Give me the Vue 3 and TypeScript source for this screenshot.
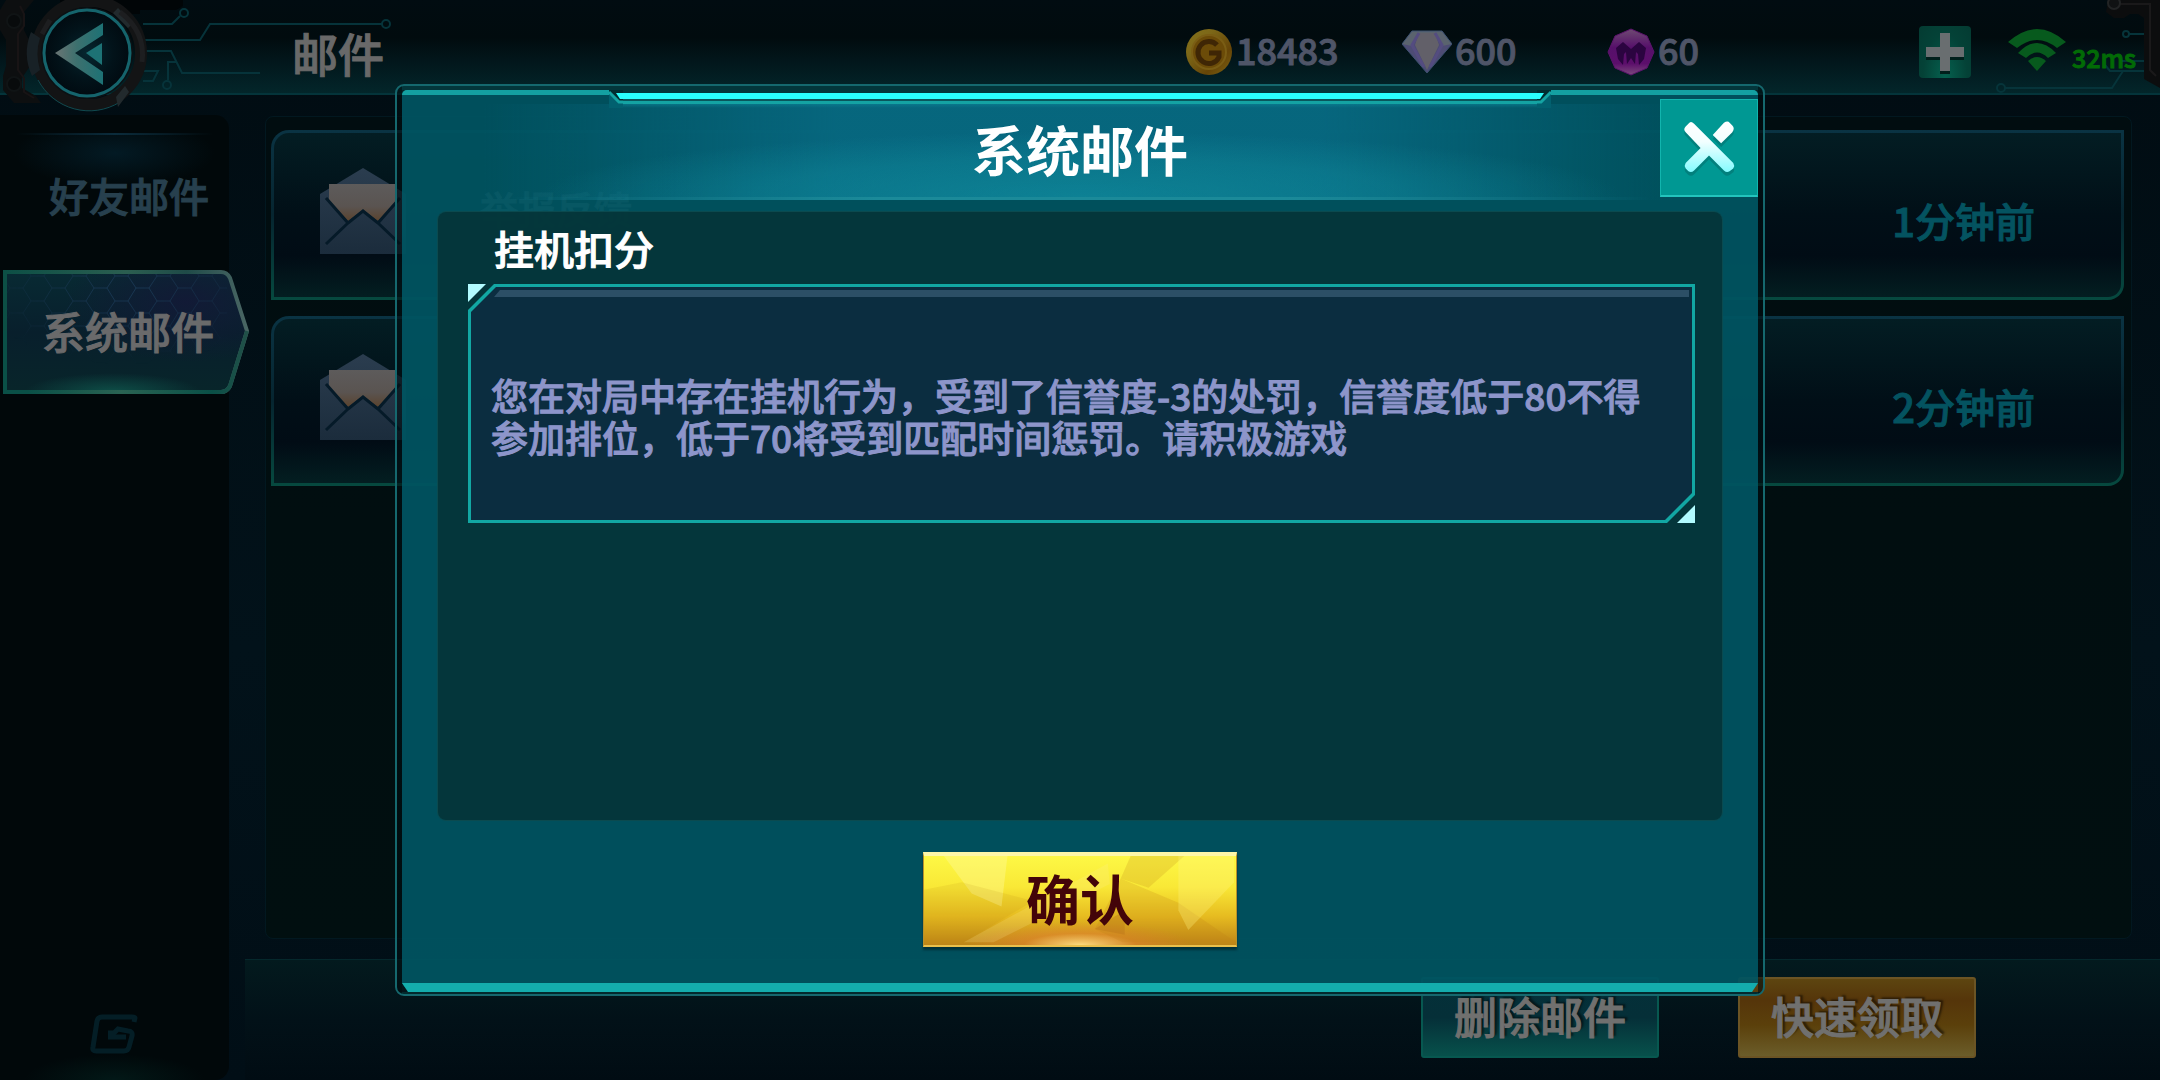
<script setup lang="ts">
import { ref } from 'vue'

interface Mail {
  id: number
  title: string
  time: string
}

const tabs: string[] = ['好友邮件', '系统邮件']
const activeTab = ref<string>('系统邮件')

const mails: Mail[] = [
  { id: 1, title: '举报反馈', time: '1分钟前' },
  { id: 2, title: '', time: '2分钟前' },
]

const open = ref<boolean>(true)
const message =
  '您在对局中存在挂机行为，受到了信誉度-3的处罚，信誉度低于80不得参加排位，低于70将受到匹配时间惩罚。请积极游戏'

function close(): void {
  open.value = false
}
</script>

<template>
  <div class="page">
    <header class="topbar">
      <svg class="decor decor-left" width="400" height="112" viewBox="0 0 400 112" aria-hidden="true">
        <defs>
          <linearGradient id="arrowFill" x1="0" y1="0" x2="1" y2="0">
            <stop offset="0" stop-color="#6b7574" />
            <stop offset="0.45" stop-color="#3d706e" />
            <stop offset="1" stop-color="#1d7275" />
          </linearGradient>
          <radialGradient id="dial">
            <stop offset="0" stop-color="#06262f" />
            <stop offset="0.6" stop-color="#02131a" />
            <stop offset="1" stop-color="#010b11" />
          </radialGradient>
        </defs>
        <path d="M100 0H183V6L176 10H140V14H60V0Z" fill="#010507" />
        <path d="M6 0H34L24 12V30L30 42V66L22 78V88L36 96L41 103H14L3 90V76L6 66V40L0 30V10Z" fill="#0d0f10" />
        <path d="M20 6L24 14V26L18 34V70L24 78V92L34 98" fill="none" stroke="#181415" stroke-width="2" />
        <circle cx="14" cy="21" r="7" fill="#080b0c" stroke="#101415" stroke-width="2" />
        <circle cx="14" cy="84" r="7" fill="#080b0c" stroke="#101415" stroke-width="2" />
        <g fill="none" stroke="#06333a" stroke-width="2">
          <path d="M143 24H172L180 16" />
          <circle cx="184" cy="13" r="4" />
          <path d="M143 40H200L210 24H382" />
          <circle cx="386" cy="24" r="4" />
          <path d="M143 51H171L182 73H260" />
          <path d="M177 62H168V80" />
          <circle cx="167" cy="85" r="4" />
          <path d="M143 71H158L153 81H143" />
        </g>
        <circle cx="89" cy="53" r="52" fill="none" stroke="#131415" stroke-width="12" />
        <path d="M38 80A58 58 0 0 0 120 102" fill="none" stroke="#0f4a50" stroke-width="1" />
        <path d="M31 32L40 38Q35 53 40 70L32 76Q22 54 31 32Z" fill="#182126" />
        <path d="M118 8L133 23L128 28L113 13ZM116 97L125 86L129 92L118 107Z" fill="#222a2d" />
        <path d="M50 20L42 34M120 12Q146 32 142 62" fill="none" stroke="#1d1e20" stroke-width="5" />
        <circle cx="87" cy="53" r="46" fill="#0b1114" />
        <circle cx="87" cy="53" r="43" fill="url(#dial)" stroke="#15646c" stroke-width="3" />
        <path d="M55 53L103 23V35L75 53L103 72V85Z" fill="url(#arrowFill)" />
        <path d="M86 53L102 43V65Z" fill="#1d7275" />
      </svg>
      <button class="back" type="button" aria-label="返回"></button>
      <h1 class="heading">邮件</h1>

      <ul class="wallet">
        <li>
          <svg width="48" height="48" viewBox="0 0 48 48" aria-hidden="true">
            <defs>
              <linearGradient id="coin" x1="0" y1="0" x2="1" y2="1">
                <stop offset="0" stop-color="#84701a" />
                <stop offset="0.3" stop-color="#7d6818" />
                <stop offset="0.7" stop-color="#664507" />
                <stop offset="1" stop-color="#7d6414" />
              </linearGradient>
            </defs>
            <ellipse cx="24" cy="24" rx="23" ry="23" fill="url(#coin)" />
            <circle cx="24" cy="24" r="17" fill="#6b4b08" stroke="#7a5d14" stroke-width="2" />
            <path d="M32 17A11 11 0 1 0 34 29V25H24" fill="none" stroke="#3f2605" stroke-width="5" />
          </svg>
          <span>18483</span>
        </li>
        <li>
          <svg width="50" height="44" viewBox="0 0 50 44" aria-hidden="true">
            <path d="M10 1H40L50 14L25 43L0 14Z" fill="#4d4c74" />
            <path d="M10 1H40L50 14L40 16L33 5H17L10 16L0 14Z" fill="#5a636e" />
            <path d="M17 3H33L37 15L25 40L13 15Z" fill="#626069" />
            <path d="M17 3L10 15L22 37M33 3L40 15L28 37" fill="none" stroke="#544c80" stroke-width="3" />
            <path d="M10 1H40L50 14L25 43L0 14Z" fill="none" stroke="#3a506f" stroke-width="1" />
          </svg>
          <span>600</span>
        </li>
        <li>
          <svg width="48" height="48" viewBox="0 0 48 48" aria-hidden="true">
            <defs>
              <linearGradient id="gem" x1="0" y1="0" x2="0" y2="1">
                <stop offset="0" stop-color="#6e4a72" />
                <stop offset="0.4" stop-color="#56106a" />
                <stop offset="0.75" stop-color="#5c0e6b" />
                <stop offset="1" stop-color="#7b4a7c" />
              </linearGradient>
            </defs>
            <path d="M24 1L40 8L47 24L40 40L24 47L8 40L1 24L8 8Z" fill="url(#gem)" stroke="#5c126c" stroke-width="1" />
            <path
              d="M9 20L16 14L24 21L32 14L39 20L37 31L32 37L31 26L29 24L28 36L24 30L20 36L19 24L17 26L16 37L11 31Z"
              fill="#2b0440"
            />
          </svg>
          <span>60</span>
        </li>
      </ul>

      <button class="plus" type="button" aria-label="添加">
        <svg width="52" height="52" viewBox="0 0 52 52" aria-hidden="true">
          <path d="M21 10H31V24H45V34H31V48H21V34H7V24H21Z" fill="#01201c" />
          <path d="M21 7H31V21H45V31H31V45H21V31H7V21H21Z" fill="#696e70" />
        </svg>
      </button>
      <svg class="wifi" width="58" height="44" viewBox="0 0 58 44" aria-hidden="true">
        <path d="M0 14Q29 -12 58 14L49 20Q29 4 9 20Z" fill="#075a1d" />
        <path d="M10 25Q29 5 48 25L40 30Q29 19 18 30Z" fill="#075a1d" />
        <path d="M20 33Q29 25 38 33L29 43Z" fill="#075a1d" />
      </svg>
      <span class="ping">32ms</span>
      <svg class="decor decor-right" width="170" height="100" viewBox="0 0 170 100" aria-hidden="true">
        <g fill="none" stroke="#06343a" stroke-width="2">
          <circle cx="136" cy="34" r="3" />
          <path d="M139 34H156M115 65L120 71H156M130 61H156" />
          <circle cx="11" cy="88" r="4" />
          <path d="M15 88H122L133 71" />
        </g>
        <path d="M118 0H170V88L154 79V18L148 14H140L134 18H124L116 12Z" fill="#0c0d0e" />
        <path d="M130 4H160V70L166 76" fill="none" stroke="#1a191a" stroke-width="2" />
        <circle cx="124" cy="3" r="6" fill="#101213" stroke="#222425" stroke-width="2" />
      </svg>
    </header>

    <main class="main">
      <nav class="sidebar">
        <button
          v-for="tab in tabs"
          :key="tab"
          type="button"
          class="tab"
          :class="{ active: tab === activeTab }"
          @click="activeTab = tab"
        >
          <svg v-if="tab === activeTab" class="tab-shape" width="246" height="126" viewBox="0 0 246 126" aria-hidden="true">
            <defs>
              <pattern id="hex" width="42" height="25" patternUnits="userSpaceOnUse" x="14" y="6">
                <path
                  d="M0 12H6L14 0H27L35 12H42M6 12L14 25H27L35 12"
                  fill="none"
                  stroke="#1a3853"
                  stroke-width="1"
                />
              </pattern>
              <radialGradient id="hexFade" cx="0.5" cy="0.15" r="0.6">
                <stop offset="0" stop-color="#fff" />
                <stop offset="1" stop-color="#000" />
              </radialGradient>
              <mask id="hexMask"><rect width="246" height="126" fill="url(#hexFade)" /></mask>
              <radialGradient id="violet" cx="0.75" cy="0.25" r="0.5">
                <stop offset="0" stop-color="#121a36" />
                <stop offset="1" stop-color="#121a36" stop-opacity="0" />
              </radialGradient>
              <linearGradient id="tabFill" x1="0" y1="0" x2="0" y2="1">
                <stop offset="0" stop-color="#082a33" />
                <stop offset="0.5" stop-color="#081f2c" />
                <stop offset="1" stop-color="#08252a" />
              </linearGradient>
              <radialGradient id="tabGlow" cx="0.48" cy="1" r="0.4" gradientTransform="translate(0 0.6) scale(1 0.4)">
                <stop offset="0" stop-color="#106054" stop-opacity="0.7" />
                <stop offset="1" stop-color="#106054" stop-opacity="0" />
              </radialGradient>
              <linearGradient id="tabEdge" x1="0" y1="0" x2="1" y2="0">
                <stop offset="0" stop-color="#0c4f45" />
                <stop offset="0.5" stop-color="#2b5e50" />
                <stop offset="0.75" stop-color="#1f4b48" />
                <stop offset="1" stop-color="#4a6664" />
              </linearGradient>
              <linearGradient id="tabBase" gradientUnits="userSpaceOnUse" x1="0" y1="0" x2="246" y2="0">
                <stop offset="0.1" stop-color="#0a5047" />
                <stop offset="0.48" stop-color="#2a6353" />
                <stop offset="0.85" stop-color="#0a5047" />
                <stop offset="1" stop-color="#225048" />
              </linearGradient>
            </defs>
            <path d="M2 2H218Q224 2 227 8L244 61L227 116Q224 122 218 122H2Z" fill="url(#tabFill)" />
            <path d="M2 2H218Q224 2 227 8L244 61L227 116Q224 122 218 122H2Z" fill="url(#violet)" />
            <rect x="4" y="4" width="220" height="118" fill="url(#hex)" mask="url(#hexMask)" />
            <rect x="4" y="4" width="220" height="118" fill="url(#tabGlow)" />
            <path
              d="M2 2H218Q224 2 227 8L244 61L227 116Q224 122 218 122H2Z"
              fill="none"
              stroke="url(#tabEdge)"
              stroke-width="4"
            />
            <path d="M2 61V122H218Q224 122 227 116L244 61" fill="none" stroke="url(#tabBase)" stroke-width="4" />
          </svg>
          <span>{{ tab }}</span>
        </button>
        <svg class="brand" width="48" height="40" viewBox="0 0 48 40" aria-hidden="true">
          <path
            d="M44 8L45 4Q45 3 42 3H12Q8 3 7 7L3 33Q2 37 6 37H34Q38 37 39 33L42 22Q43 17 38 17L28 15L24 19H18"
            fill="none"
            stroke="#041e26"
            stroke-width="5"
          />
          <path d="M18 23H36" stroke="#041e26" stroke-width="5" />
        </svg>
      </nav>

      <section class="content">
        <ul class="mails">
          <li v-for="mail in mails" :key="mail.id" class="mail">
            <svg class="envelope" width="86" height="88" viewBox="0 0 86 88" aria-hidden="true">
              <defs>
                <linearGradient id="paper" x1="0" y1="0" x2="0" y2="1">
                  <stop offset="0" stop-color="#5d5b5b" />
                  <stop offset="0.6" stop-color="#5a5451" />
                  <stop offset="1" stop-color="#5a432e" />
                </linearGradient>
                <linearGradient id="cover" x1="0" y1="0" x2="0" y2="1">
                  <stop offset="0" stop-color="#2b3d4f" />
                  <stop offset="1" stop-color="#1b2c3c" />
                </linearGradient>
              </defs>
              <path d="M0 26L43 0L86 26V86H0Z" fill="url(#cover)" />
              <path d="M9 16H77V34L58 53L43 42L28 53L9 34Z" fill="url(#paper)" />
              <path d="M6 30L28 55L6 76M80 30L58 55L80 76M28 55L43 43L58 55" fill="none" stroke="#051a28" stroke-width="3" />
            </svg>
            <h2 v-if="mail.title" class="mail-title">{{ mail.title }}</h2>
            <time class="mail-time">{{ mail.time }}</time>
          </li>
        </ul>
        <footer class="actions">
          <button class="action delete" type="button">删除邮件</button>
          <button class="action claim" type="button">快速领取</button>
        </footer>
      </section>
    </main>

    <div v-if="open" class="overlay">
      <section class="dialog" role="dialog" aria-modal="true" aria-labelledby="dialog-title">
        <div class="dialog-body">
          <div class="rail" aria-hidden="true">
            <i class="rail-side"></i>
            <svg width="14" height="18" viewBox="0 0 14 18">
              <path d="M0 0H14V13L10 13L0 3Z" fill="#012c31" />
              <path d="M0 5V2L9 12H14V18H0Z" fill="#02606f" />
              <path d="M0 2L10 12H14" fill="none" stroke="#14a3a3" stroke-width="3" />
              <path d="M7 3H14V9H11Z" fill="#2affff" />
            </svg>
            <i class="rail-mid"></i>
            <svg width="14" height="18" viewBox="0 0 14 18">
              <path d="M14 0H0V13L4 13L14 3Z" fill="#012c31" />
              <path d="M14 5V2L5 12H0V18H14Z" fill="#02606f" />
              <path d="M14 2L4 12H0" fill="none" stroke="#14a3a3" stroke-width="3" />
              <path d="M7 3H0V9H3Z" fill="#2affff" />
            </svg>
            <i class="rail-side"></i>
          </div>
          <header class="dialog-head">
            <h2 id="dialog-title">系统邮件</h2>
            <button class="close" type="button" aria-label="关闭" @click="close">
              <svg width="54" height="56" viewBox="0 0 56 60" aria-hidden="true">
                <defs>
                  <linearGradient id="cross" x1="0" y1="0" x2="0" y2="1">
                    <stop offset="0" stop-color="#ffffff" />
                    <stop offset="0.4" stop-color="#f2ffff" />
                    <stop offset="1" stop-color="#84fbff" />
                  </linearGradient>
                </defs>
                <path
                  d="M7 3Q9 1 12 4L54 46Q56 49 54 52L50 55Q47 57 44 54L28 38L12 54Q9 57 6 55L3 52Q1 49 3 46L19 30L3 13Q0 10 3 7ZM44 3Q47 1 49 2L53 6Q56 9 53 13L41 25L32 16Z"
                  fill="#046f6e"
                  transform="translate(0 4)"
                  opacity="0.6"
                />
                <path
                  d="M7 3Q9 1 12 4L54 46Q56 49 54 52L50 55Q47 57 44 54L28 38L12 54Q9 57 6 55L3 52Q1 49 3 46L19 30L3 13Q0 10 3 7ZM44 3Q47 1 49 2L53 6Q56 9 53 13L41 25L32 16Z"
                  fill="url(#cross)"
                />
              </svg>
            </button>
          </header>
          <div class="panel">
            <h3 class="panel-title">挂机扣分</h3>
            <div class="letter-frame">
              <div class="letter">
                <p>{{ message }}</p>
              </div>
            </div>
          </div>
          <button class="confirm" type="button" @click="close">
            <svg class="facets" viewBox="0 0 314 95" preserveAspectRatio="none" aria-hidden="true">
              <path d="M20 0H84L78 54L48 40Z" fill="#fffa9a" opacity="0.4" />
              <path d="M0 36L38 28L110 48L40 92H0Z" fill="#b98112" opacity="0.12" />
              <path d="M40 92L185 8L187 30L70 92Z" fill="#fff0a0" opacity="0.18" />
              <path d="M208 0H262L226 34L198 24Z" fill="#c9921b" opacity="0.25" />
              <path d="M198 24L256 50L314 92L200 92L172 78Z" fill="#c07c14" opacity="0.2" />
              <path d="M256 0H312V28L266 79L256 58Z" fill="#fff480" opacity="0.3" />
              <path d="M172 78L202 58V84Z" fill="#b7701a" opacity="0.35" />
            </svg>
            <span>确认</span>
          </button>
        </div>
      </section>
    </div>
  </div>
</template>

<style>
body {
  margin: 0;
  background: #010d13;
}
</style>

<style scoped>
.page {
  position: relative;
  display: flex;
  flex-direction: column;
  min-height: 100vh;
  overflow: hidden;
  background: linear-gradient(180deg, #010c12, #02121a 60%, #010e16);
  font-family: 'Noto Sans CJK SC', 'Noto Sans', sans-serif;
  font-weight: 500;
  -webkit-text-stroke: 1px currentColor;
  color: #696969;
}

h1,
h2,
h3,
p,
ul {
  margin: 0;
  padding: 0;
}

ul {
  list-style: none;
}

button {
  margin: 0;
  padding: 0;
  border: 0;
  background: none;
  font: inherit;
  color: inherit;
  cursor: pointer;
}

/* top bar */
.topbar {
  position: relative;
  z-index: 1;
  display: flex;
  align-items: center;
  box-sizing: border-box;
  height: 95px;
  padding: 10px 24px 0 42px;
  border-bottom: 2px solid #04343a;
  background: linear-gradient(180deg, #010c11 0%, #010b0e 40%, #02161b 65%, #03262a 100%);
}

.decor {
  position: absolute;
  top: 0;
  pointer-events: none;
}

.decor-left {
  left: 0;
}

.decor-right {
  right: 0;
}

.back {
  position: relative;
  width: 90px;
  height: 84px;
  border-radius: 50%;
}

.heading {
  margin: 0 auto 0 160px;
  font-size: 46px;
  line-height: 52px;
  font-weight: 500;
}

.wallet {
  display: grid;
  grid-template-columns: 217px 205px 312px;
}

.wallet li {
  display: flex;
  align-items: center;
  gap: 3px;
  font-size: 36px;
  line-height: 48px;
  color: #4f5568;
}

.wallet span {
  margin-bottom: 6px;
}

.plus {
  width: 52px;
  height: 52px;
  border-radius: 4px;
  background: radial-gradient(ellipse at 50% 100%, #05614f, #044237 60%, #043b32);
}

.plus svg {
  display: block;
}

.wifi {
  margin: 0 6px 4px 37px;
}

.ping {
  position: relative;
  z-index: 1;
  margin-top: 10px;
  font-size: 25px;
  line-height: 32px;
  color: #026b06;
}

/* columns */
.main {
  flex: 1;
  display: grid;
  grid-template-columns: 245px 1fr;
}

.sidebar {
  position: relative;
  display: flex;
  flex-direction: column;
  width: 229px;
  margin-top: 20px;
  border-radius: 0 14px 14px 0;
  background:
    radial-gradient(ellipse 100px 34px at 50% 19px, #031a24, transparent) 0 19px no-repeat,
    radial-gradient(ellipse 90px 26px at 50% 100%, #021817, transparent),
    #01080a;
}

.sidebar::before {
  content: '';
  height: 2px;
  margin: 18px 16px 0;
  background: linear-gradient(90deg, transparent, #0b2c3c, transparent);
}

.tab {
  position: relative;
  align-self: flex-start;
  width: 246px;
  height: 126px;
  margin-left: 3px;
  padding-bottom: 6px;
  font-size: 40px;
  line-height: 48px;
  color: #27404e;
  text-align: left;
}

.tab span {
  position: relative;
  margin-left: 46px;
}

.tab.active {
  margin-top: 9px;
  font-size: 43px;
  color: #6a6a6b;
}

.tab.active span {
  margin-left: 39px;
}

.tab-shape {
  position: absolute;
  inset: 0;
}

.brand {
  margin: auto 0 26px 90px;
}

.content {
  display: flex;
  flex-direction: column;
}

.mails {
  flex: 1;
  display: flex;
  flex-direction: column;
  gap: 16px;
  margin: 21px 28px 20px 20px;
  padding: 13px 7px 0 5px;
  border: 1px solid #021820;
  border-radius: 8px;
  background: linear-gradient(180deg, #010d10, #010f10);
}

.mail {
  display: flex;
  align-items: center;
  box-sizing: border-box;
  height: 170px;
  padding: 0 86px 0 46px;
  border: 3px solid transparent;
  border-radius: 18px 0 16px 0;
  background:
    linear-gradient(180deg, #031d23, #010f17 50%, #010c15 75%, #031e21) padding-box,
    linear-gradient(180deg, #0a3343, #062530 50%, #06493f) border-box;
}

.envelope {
  margin-bottom: 6px;
}

.mail-title {
  margin: 0 0 14px 74px;
  font-size: 38px;
  line-height: 40px;
  font-weight: 500;
  color: #7c8080;
}

.mail-time {
  margin: 10px 0 0 auto;
  font-size: 40px;
  line-height: 48px;
  color: #045360;
}

.actions {
  display: flex;
  justify-content: flex-end;
  align-items: flex-start;
  gap: 79px;
  box-sizing: border-box;
  height: 121px;
  padding: 17px 184px 0 0;
  border-top: 1px solid #05282c;
  background: linear-gradient(180deg, #031a1e, #021118 50%, #010c13);
}

.action {
  box-sizing: border-box;
  width: 238px;
  height: 81px;
  padding-bottom: 5px;
  border: 2px solid #075850;
  border-radius: 3px;
  font-size: 43px;
  line-height: 48px;
  color: #70706f;
  text-shadow: 3px -2px 2px rgba(0, 0, 0, 0.5);
}

.delete {
  background: linear-gradient(180deg, #043039, #052f38 50%, #07514b);
}

.claim {
  border-color: #6b5424;
  background: linear-gradient(180deg, #5d4510, #55350a 28%, #5b400b 60%, #6b5d2a);
}

/* dialog */
.overlay {
  position: absolute;
  z-index: 2;
  inset: 0;
  display: flex;
  justify-content: center;
  padding: 84px 0;
}

.dialog {
  display: flex;
  box-sizing: border-box;
  width: 100%;
  max-width: 1370px;
  padding: 4px 5px 2px;
  border: 2px solid #15686e;
  border-radius: 9px;
  background:
    linear-gradient(rgba(0, 12, 15, 0.6), rgba(0, 12, 15, 0.6)) 0 0 / 5px 100% no-repeat,
    linear-gradient(rgba(0, 12, 15, 0.6), rgba(0, 12, 15, 0.6)) 100% 0 / 5px 100% no-repeat,
    linear-gradient(#03363b, #03363b) 0 0 / 100% 4px no-repeat,
    linear-gradient(#03292d, #03292d) 0 100% / 100% 2px no-repeat;
}

.dialog-body {
  position: relative;
  flex: 1;
  display: flex;
  flex-direction: column;
  border-bottom: 9px solid #14adad;
  border-radius: 5px 5px 0 0;
  background: rgba(0, 84, 97, 0.94);
  clip-path: polygon(0 0, 100% 0, 100% calc(100% - 9px), calc(100% - 6px) 100%, 6px 100%, 0 calc(100% - 9px));
}

.rail {
  display: flex;
  height: 18px;
  margin-bottom: -4px;
  position: relative;
}

.rail-side {
  flex: 0 0 207px;
  border-top: 5px solid #14a0a2;
  box-sizing: border-box;
}

.rail-side:first-child {
  border-top-left-radius: 5px;
}

.rail-side:last-child {
  border-top-right-radius: 5px;
}

.rail-mid {
  flex: 1;
  background: linear-gradient(
    180deg,
    #03363b 0 3px,
    #2affff 3px 9px,
    #0a565c 9px 11px,
    #14a3a3 11px 14px,
    rgba(12, 130, 148, 0.6) 14px,
    transparent 18px
  );
}

.dialog-head {
  display: flex;
  justify-content: center;
  align-items: center;
  box-sizing: border-box;
  height: 96px;
  padding-bottom: 4px;
  border-bottom: 3px solid;
  border-image: linear-gradient(90deg, transparent 8%, #1b8a99 35%, #1b8a99 65%, transparent 92%) 1;
  background:
    radial-gradient(ellipse 40% 70% at 50% 100%, rgba(16, 140, 158, 0.7), rgba(16, 140, 158, 0.4) 60%, transparent),
    linear-gradient(90deg, transparent 6%, rgba(8, 108, 134, 0.8) 32%, rgba(8, 108, 134, 0.8) 68%, transparent 94%);
}

.dialog-head h2 {
  font-size: 54px;
  line-height: 60px;
  font-weight: 700;
  -webkit-text-stroke: 0;
  color: #fff;
}

.close {
  position: absolute;
  top: 9px;
  right: 0;
  display: flex;
  justify-content: center;
  align-items: center;
  box-sizing: border-box;
  width: 98px;
  height: 98px;
  border: 1px solid #12b5ae;
  border-bottom: 2px solid #23c4bd;
  background: #009893;
}

.panel {
  flex: 1;
  margin: 12px 36px 0;
  padding: 16px 27px 24px 30px;
  border-radius: 8px;
  background: rgba(4, 54, 58, 0.97);
  box-shadow: 0 0 0 1px #0b4a4f;
}

.panel-title {
  margin: 0 26px 16px;
  font-size: 40px;
  line-height: 40px;
  font-weight: 500;
  color: #fff;
}

.letter-frame {
  position: relative;
}

.letter-frame::before,
.letter-frame::after {
  content: '';
  position: absolute;
  width: 18px;
  height: 18px;
  background: #b2fbff;
}

.letter-frame::before {
  top: 0;
  left: 0;
  clip-path: polygon(0 0, 100% 0, 0 100%);
}

.letter-frame::after {
  right: 0;
  bottom: 0;
  clip-path: polygon(100% 0, 100% 100%, 0 100%);
}

.letter {
  position: relative;
  display: flex;
  align-items: center;
  box-sizing: border-box;
  min-height: 239px;
  padding: 28px 32px 4px 23px;
  background: #12a7a3;
  clip-path: polygon(26px 0, 100% 0, 100% calc(100% - 28px), calc(100% - 28px) 100%, 0 100%, 0 26px);
}

.letter::before,
.letter::after {
  content: '';
  position: absolute;
}

.letter::before {
  inset: 3px;
  background: #0b2d40;
  clip-path: polygon(25px 0, 100% 0, 100% calc(100% - 27px), calc(100% - 27px) 100%, 0 100%, 0 25px);
}

.letter::after {
  top: 6px;
  left: 26px;
  right: 6px;
  height: 7px;
  background: #2c4f66;
  clip-path: polygon(6px 0, 100% 0, 100% 100%, 0 100%);
}

.letter p {
  position: relative;
  z-index: 1;
  font-size: 37px;
  line-height: 42px;
  color: #8d95ca;
}

.confirm {
  position: relative;
  align-self: center;
  box-sizing: border-box;
  width: 314px;
  height: 95px;
  margin: 32px 0 36px;
  padding-bottom: 5px;
  border: 1px solid #b8902a;
  border-top: 4px solid #fdf6a8;
  border-bottom: 2px solid #e9c04c;
  background:
    radial-gradient(ellipse 36% 26% at 50% 100%, rgba(255, 222, 130, 0.95), rgba(230, 130, 50, 0.5) 50%, transparent),
    linear-gradient(180deg, #fdf845 0%, #f9e836 35%, #e6bb20 68%, #bd8417 100%);
  box-shadow: 0 3px 2px rgba(0, 30, 35, 0.6);
  font-size: 54px;
  line-height: 60px;
  font-weight: 700;
  -webkit-text-stroke: 0;
  color: #430409;
}

.confirm span {
  position: relative;
}

.facets {
  position: absolute;
  inset: 0;
  width: 100%;
  height: 100%;
}
</style>
